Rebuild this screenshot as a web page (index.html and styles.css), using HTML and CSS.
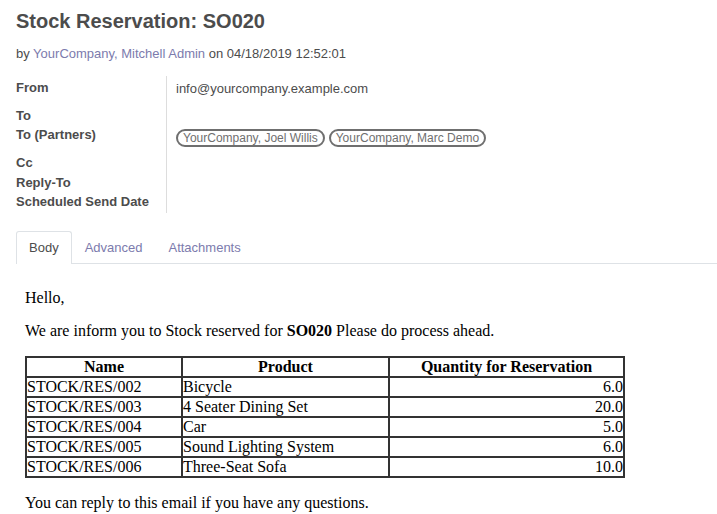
FILE: index.html
```html
<!DOCTYPE html>
<html>
<head>
<meta charset="utf-8">
<link rel="stylesheet" href="styles.css">
</head>
<body>
<div class="sheet">
  <h1 class="title">Stock Reservation: SO020</h1>
  <div class="byline">by <a class="link">YourCompany, Mitchell Admin</a> on 04/18/2019 12:52:01</div>
  <div class="fields">
    <div class="labels">
      <div class="lbl r-from">From</div>
      <div class="lbl r-to">To</div>
      <div class="lbl r-partners">To (Partners)</div>
      <div class="lbl r-cc">Cc</div>
      <div class="lbl r-reply">Reply-To</div>
      <div class="lbl r-date">Scheduled Send Date</div>
    </div>
    <div class="values">
      <div class="val r-from">info@yourcompany.example.com</div>
      <div class="val r-to"></div>
      <div class="val r-partners"><span class="tag">YourCompany, Joel Willis</span><span class="tag">YourCompany, Marc Demo</span></div>
      <div class="val r-cc"></div>
      <div class="val r-reply"></div>
      <div class="val r-date"></div>
    </div>
  </div>
  <div class="tabs">
    <div class="tab active">Body</div>
    <div class="tab">Advanced</div>
    <div class="tab">Attachments</div>
  </div>
  <div class="mailbody">
    <p>Hello,</p>
    <p>We are inform you to Stock reserved for <b>SO020</b> Please do process ahead.</p>
    <table class="res">
      <thead>
        <tr><th class="c1">Name</th><th class="c2">Product</th><th class="c3">Quantity for Reservation</th></tr>
      </thead>
      <tbody>
        <tr><td>STOCK/RES/002</td><td>Bicycle</td><td class="num">6.0</td></tr>
        <tr><td>STOCK/RES/003</td><td>4 Seater Dining Set</td><td class="num">20.0</td></tr>
        <tr><td>STOCK/RES/004</td><td>Car</td><td class="num">5.0</td></tr>
        <tr><td>STOCK/RES/005</td><td>Sound Lighting System</td><td class="num">6.0</td></tr>
        <tr><td>STOCK/RES/006</td><td>Three-Seat Sofa</td><td class="num">10.0</td></tr>
      </tbody>
    </table>
    <p class="last">You can reply to this email if you have any questions.</p>
  </div>
</div>
</body>
</html>
```

FILE: styles.css
```css
html, body {
  margin: 0;
  padding: 0;
  background: #fff;
}
body {
  font-family: "Liberation Sans", Arial, sans-serif;
  font-size: 13px;
  color: #4c4c4c;
}
.sheet {
  padding: 9px 0 0 16px;
}
.title {
  margin: 0;
  font-size: 20px;
  font-weight: bold;
  line-height: 24px;
  color: #4c4c4c;
}
.byline {
  margin-top: 11px;
  line-height: 20px;
}
.link {
  color: #7c7bad;
  text-decoration: none;
}
.fields {
  display: flex;
  margin-top: 12px;
}
.labels {
  width: 150px;
  border-right: 1px solid #ddd;
  padding-bottom: 2px;
}
.lbl {
  font-weight: bold;
  line-height: 19px;
}
.values {
  padding-left: 9px;
}
.val {
  line-height: 19px;
}
.lbl.r-from { height: 28px; padding-top: 2px; }
.val.r-from { height: 27px; padding-top: 3px; }
.r-to { height: 19px; }
.r-partners { height: 28px; }
.r-cc { height: 20px; }
.r-reply { height: 19px; }
.r-date { height: 19px; }
.val.r-partners { display: flex; align-items: flex-start; }
.tag {
  display: block;
  border: 2px solid #6f6f6f;
  border-radius: 10px;
  padding: 0 5px;
  font-size: 12px;
  line-height: 14px;
  color: #6f6f6f;
  margin-right: 4px;
  margin-top: 4px;
}
.tabs {
  display: flex;
  margin-top: 18px;
  border-bottom: 1px solid #dee2e6;
  height: 32px;
}
.tab {
  padding: 0 12px;
  line-height: 32px;
  color: #7c7bad;
  border: 1px solid transparent;
  border-bottom: none;
}
.tab.active {
  color: #4c4c4c;
  border-color: #dee2e6;
  border-radius: 3px 3px 0 0;
  background: #fff;
  height: 32px;
  margin-bottom: -1px;
}
.mailbody {
  padding: 25px 0 0 9px;
  font-family: "Liberation Serif", "Times New Roman", serif;
  font-size: 16px;
  color: #000;
}
.mailbody p {
  margin: 0 0 16px 0;
  line-height: 17px;
}
table.res {
  border-collapse: separate;
  border-spacing: 0;
  border: 1px solid #333;
  width: 600px;
  margin-top: 17px;
  margin-bottom: 16px;
}
table.res th, table.res td {
  border: 1px solid #333;
  padding: 0;
  line-height: 18px;
  font-size: 16px;
}
table.res th { text-align: center; }
.c1 { width: 154px; }
.c2 { width: 205px; }
.num { text-align: right; }
.mailbody p.last { margin-top: 0; }
```
